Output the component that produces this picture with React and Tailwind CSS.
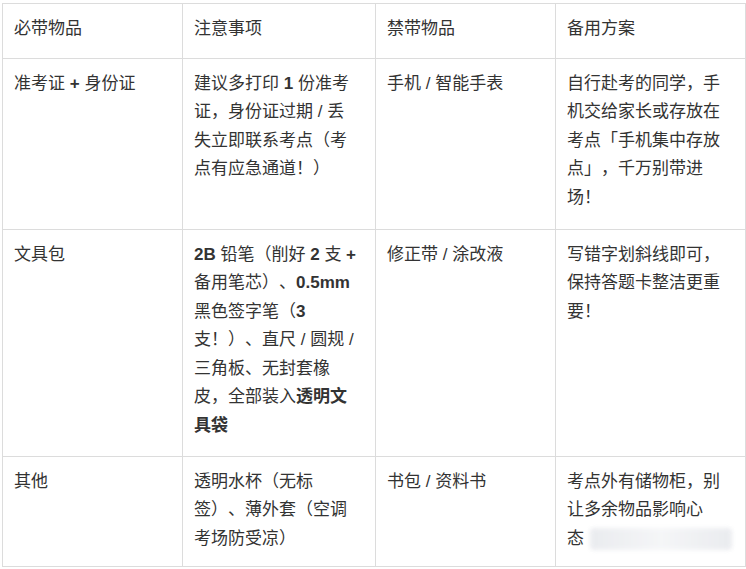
const B = ({ children }) => <b className="font-semibold">{children}</b>;

const rows = [
  {
    h: "h-[171px]",
    cells: [
      [<>准考证 <B>+</B> 身份证</>],
      [<>建议多打印 <B>1</B> 份准考</>, "证，身份证过期 / 丢", "失立即联系考点（考", "点有应急通道！）"],
      ["手机 / 智能手表"],
      ["自行赴考的同学，手", "机交给家长或存放在", "考点「手机集中存放", "点」，千万别带进", "场！"],
    ],
  },
  {
    h: "h-[227px]",
    cells: [
      ["文具包"],
      [
        <><B>2B</B> 铅笔（削好 <B>2</B> 支 <B>+</B></>,
        <>备用笔芯）、<B>0.5mm</B></>,
        <>黑色签字笔（<B>3</B></>,
        "支！）、直尺 / 圆规 /",
        "三角板、无封套橡",
        <>皮，全部装入<b className="font-bold">透明文</b></>,
        <b className="font-bold">具袋</b>,
      ],
      ["修正带 / 涂改液"],
      ["写错字划斜线即可，", "保持答题卡整洁更重", "要！"],
    ],
  },
  {
    h: "h-[110px]",
    cells: [
      ["其他"],
      ["透明水杯（无标", "签）、薄外套（空调", "考场防受凉）"],
      ["书包 / 资料书"],
      [
        "考点外有储物柜，别",
        "让多余物品影响心",
        <>
          态
          <span className="ml-[6px] inline-block h-[22px] w-[142px] align-middle rounded-sm bg-gradient-to-r from-gray-200 via-gray-100 to-gray-200 opacity-80 blur-[2px]" />
        </>,
      ],
    ],
  },
];

const heads = ["必带物品", "注意事项", "禁带物品", "备用方案"];

export default function App() {
  return (
    <div
      className="min-h-screen bg-white pl-[2px] pt-[3px] text-[17px] leading-[28.5px] text-[#333] [text-spacing-trim:space-all]"
      style={{ fontFamily: '"Liberation Sans", "Noto Sans CJK SC", sans-serif' }}
    >
      <table className="w-[743px] table-fixed border-collapse">
        <colgroup>
          <col className="w-[180px]" />
          <col className="w-[193px]" />
          <col className="w-[180px]" />
          <col className="w-[190px]" />
        </colgroup>
        <thead>
          <tr className="h-[54px]">
            {heads.map((t) => (
              <th key={t} className="border border-[#dcdcdc] px-[11px] pb-[14px] pt-[11px] text-left align-top font-normal">
                {t}
              </th>
            ))}
          </tr>
        </thead>
        <tbody>
          {rows.map((r, i) => (
            <tr key={i} className={r.h}>
              {r.cells.map((lines, j) => (
                <td key={j} className="border border-[#dcdcdc] px-[11px] pt-[11px] align-top">
                  {lines.map((l, k) => (
                    <div key={k} className="whitespace-nowrap">
                      {l}
                    </div>
                  ))}
                </td>
              ))}
            </tr>
          ))}
        </tbody>
      </table>
    </div>
  );
}
